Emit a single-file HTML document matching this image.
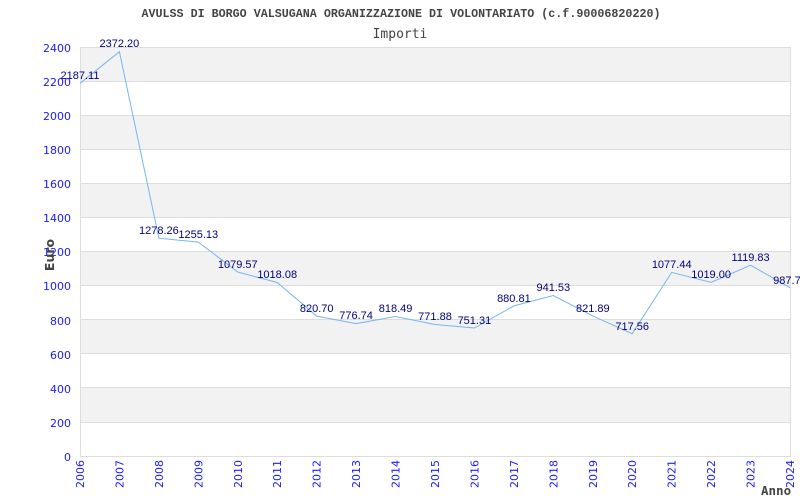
<!DOCTYPE html>
<html><head><meta charset="utf-8"><style>body{margin:0;background:#fff}svg{display:block}</style></head><body>
<svg width="800" height="500" xmlns="http://www.w3.org/2000/svg">
<rect width="800" height="500" fill="#fff"/>
<g fill="#f2f2f2">
<rect x="80" y="47" width="710" height="34"/>
<rect x="80" y="115.2" width="710" height="34"/>
<rect x="80" y="183.3" width="710" height="34"/>
<rect x="80" y="251.5" width="710" height="34"/>
<rect x="80" y="319.7" width="710" height="34"/>
<rect x="80" y="387.8" width="710" height="34"/>
</g>
<g stroke="#dddddd" stroke-width="1">
<line x1="80" y1="81.5" x2="790" y2="81.5"/><line x1="80" y1="115.5" x2="790" y2="115.5"/>
<line x1="80" y1="149.5" x2="790" y2="149.5"/><line x1="80" y1="183.5" x2="790" y2="183.5"/>
<line x1="80" y1="217.5" x2="790" y2="217.5"/><line x1="80" y1="251.5" x2="790" y2="251.5"/>
<line x1="80" y1="285.5" x2="790" y2="285.5"/><line x1="80" y1="319.5" x2="790" y2="319.5"/>
<line x1="80" y1="353.5" x2="790" y2="353.5"/><line x1="80" y1="387.5" x2="790" y2="387.5"/>
<line x1="80" y1="422.5" x2="790" y2="422.5"/>
<rect x="80.5" y="47.5" width="710" height="409" fill="none"/>
</g>
<polyline fill="none" stroke="#77b5f0" stroke-width="1" points="80,83.3 119.4,51.7 158.9,238.2 198.3,242.1 237.8,272 277.2,282.5 316.7,316.1 356.1,323.6 395.6,316.5 435,324.5 474.4,328 513.9,305.9 553.3,295.5 592.8,315.9 632.2,333.7 671.7,272.4 711.1,282.3 750.6,265.2 790,287.7"/>
<g font-family="Liberation Sans, sans-serif" font-size="11" fill="#000080" text-anchor="middle">
<text x="80" y="79">2187.11</text><text x="119.4" y="47">2372.20</text>
<text x="158.9" y="234">1278.26</text><text x="198.3" y="238">1255.13</text>
<text x="237.8" y="268">1079.57</text><text x="277.2" y="278">1018.08</text>
<text x="316.7" y="312">820.70</text><text x="356.1" y="319">776.74</text>
<text x="395.6" y="312">818.49</text><text x="435" y="320">771.88</text>
<text x="474.4" y="324">751.31</text><text x="513.9" y="302">880.81</text>
<text x="553.3" y="291">941.53</text><text x="592.8" y="312">821.89</text>
<text x="632.2" y="330">717.56</text><text x="671.7" y="268">1077.44</text>
<text x="711.1" y="278">1019.00</text><text x="750.6" y="261">1119.83</text>
<text x="790" y="284">987.70</text>
</g>
<g font-family="DejaVu Sans, sans-serif" font-size="11" fill="#1a1aff" text-anchor="end">
<text x="71" y="52">2400</text><text x="71" y="86">2200</text><text x="71" y="120">2000</text>
<text x="71" y="154">1800</text><text x="71" y="188">1600</text><text x="71" y="222">1400</text>
<text x="71" y="256">1200</text><text x="71" y="290">1000</text><text x="71" y="325">800</text>
<text x="71" y="359">600</text><text x="71" y="393">400</text><text x="71" y="427">200</text>
<text x="71" y="461">0</text>
</g>
<g font-family="DejaVu Sans, sans-serif" font-size="11" fill="#1a1aff" text-anchor="end">
<text transform="translate(84,460) rotate(-90)">2006</text>
<text transform="translate(123.4,460) rotate(-90)">2007</text>
<text transform="translate(162.9,460) rotate(-90)">2008</text>
<text transform="translate(202.3,460) rotate(-90)">2009</text>
<text transform="translate(241.8,460) rotate(-90)">2010</text>
<text transform="translate(281.2,460) rotate(-90)">2011</text>
<text transform="translate(320.7,460) rotate(-90)">2012</text>
<text transform="translate(360.1,460) rotate(-90)">2013</text>
<text transform="translate(399.6,460) rotate(-90)">2014</text>
<text transform="translate(439,460) rotate(-90)">2015</text>
<text transform="translate(478.4,460) rotate(-90)">2016</text>
<text transform="translate(517.9,460) rotate(-90)">2017</text>
<text transform="translate(557.3,460) rotate(-90)">2018</text>
<text transform="translate(596.8,460) rotate(-90)">2019</text>
<text transform="translate(636.2,460) rotate(-90)">2020</text>
<text transform="translate(675.7,460) rotate(-90)">2021</text>
<text transform="translate(715.1,460) rotate(-90)">2022</text>
<text transform="translate(754.6,460) rotate(-90)">2023</text>
<text transform="translate(794,460) rotate(-90)">2024</text>
</g>
<text x="401" y="17" text-anchor="middle" font-family="Liberation Mono, monospace" font-weight="bold" font-size="11.7" fill="#444">AVULSS DI BORGO VALSUGANA ORGANIZZAZIONE DI VOLONTARIATO (c.f.90006820220)</text>
<text x="400" y="38" text-anchor="middle" font-family="DejaVu Sans Mono, monospace" font-size="13" fill="#444">Importi</text>
<text transform="translate(54,255) rotate(-90)" text-anchor="middle" font-family="DejaVu Sans, sans-serif" font-weight="bold" font-size="12.5" fill="#444">Euro</text>
<text x="761" y="495" font-family="DejaVu Sans Mono, monospace" font-weight="bold" font-size="12.5" fill="#444">Anno</text>
</svg>
</body></html>
